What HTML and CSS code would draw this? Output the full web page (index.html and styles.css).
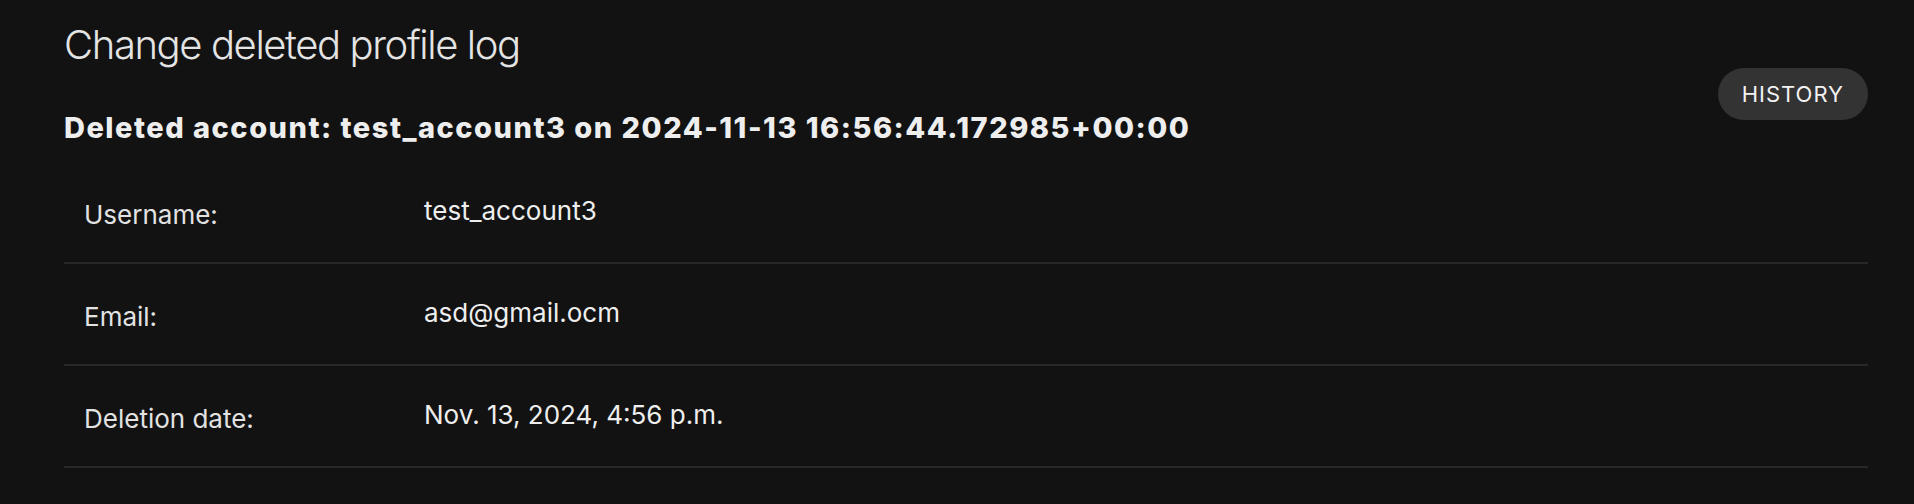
FILE: index.html
```html
<!DOCTYPE html>
<html lang="en">
<head>
<meta charset="utf-8">
<title>Change deleted profile log</title>
<link rel="stylesheet" href="styles.css">
</head>
<body>
<div class="content">
  <h1 class="title">Change deleted profile log</h1>
  <div class="subhead">
    <h2 class="subtitle">Deleted account: test_account3 on 2024-11-13 16:56:44.172985+00:00</h2>
    <a class="history-btn" href="#">History</a>
  </div>
  <fieldset class="fields">
    <div class="row">
      <div class="label">Username:</div>
      <div class="value">test_account3</div>
    </div>
    <div class="row">
      <div class="label">Email:</div>
      <div class="value">asd@gmail.ocm</div>
    </div>
    <div class="row">
      <div class="label">Deletion date:</div>
      <div class="value">Nov. 13, 2024, 4:56 p.m.</div>
    </div>
  </fieldset>
</div>
</body>
</html>
```
FILE: styles.css
```css
html, body {
  margin: 0;
  padding: 0;
  background: #121212;
}
body {
  font-family: Inter, "Noto Sans", "Liberation Sans", sans-serif;
  color: #eeeeee;
}
.content {
  padding: 22px 46px 0 64px;
}
.title {
  margin: 0;
  font-size: 40px;
  line-height: 46px;
  font-weight: 300;
  letter-spacing: -1.4px;
  color: #e4e4e4;
}
.subhead {
  display: flex;
  justify-content: space-between;
  align-items: flex-start;
}
.subtitle {
  margin: 42px 0 16px 0;
  font-size: 29px;
  line-height: 36px;
  font-weight: 800;
  letter-spacing: 1.5px;
  color: #eeeeee;
}
.history-btn {
  display: block;
  height: 52px;
  line-height: 52px;
  padding: 0 24px;
  border-radius: 26px;
  background: #333333;
  color: #f2f2f2;
  font-size: 22px;
  letter-spacing: 1px;
  text-transform: uppercase;
  text-decoration: none;
}
.fields {
  margin: 0;
  padding: 0;
  border: 0;
}
.row {
  display: flex;
  align-items: flex-start;
  padding: 31px 20px 29px;
  border-bottom: 2px solid #272727;
}
.label {
  width: 340px;
  flex: none;
  padding-top: 4px;
  font-size: 26px;
  line-height: 36px;
  color: #e2e2e2;
}
.value {
  font-size: 26px;
  line-height: 36px;
  color: #eeeeee;
}
```
